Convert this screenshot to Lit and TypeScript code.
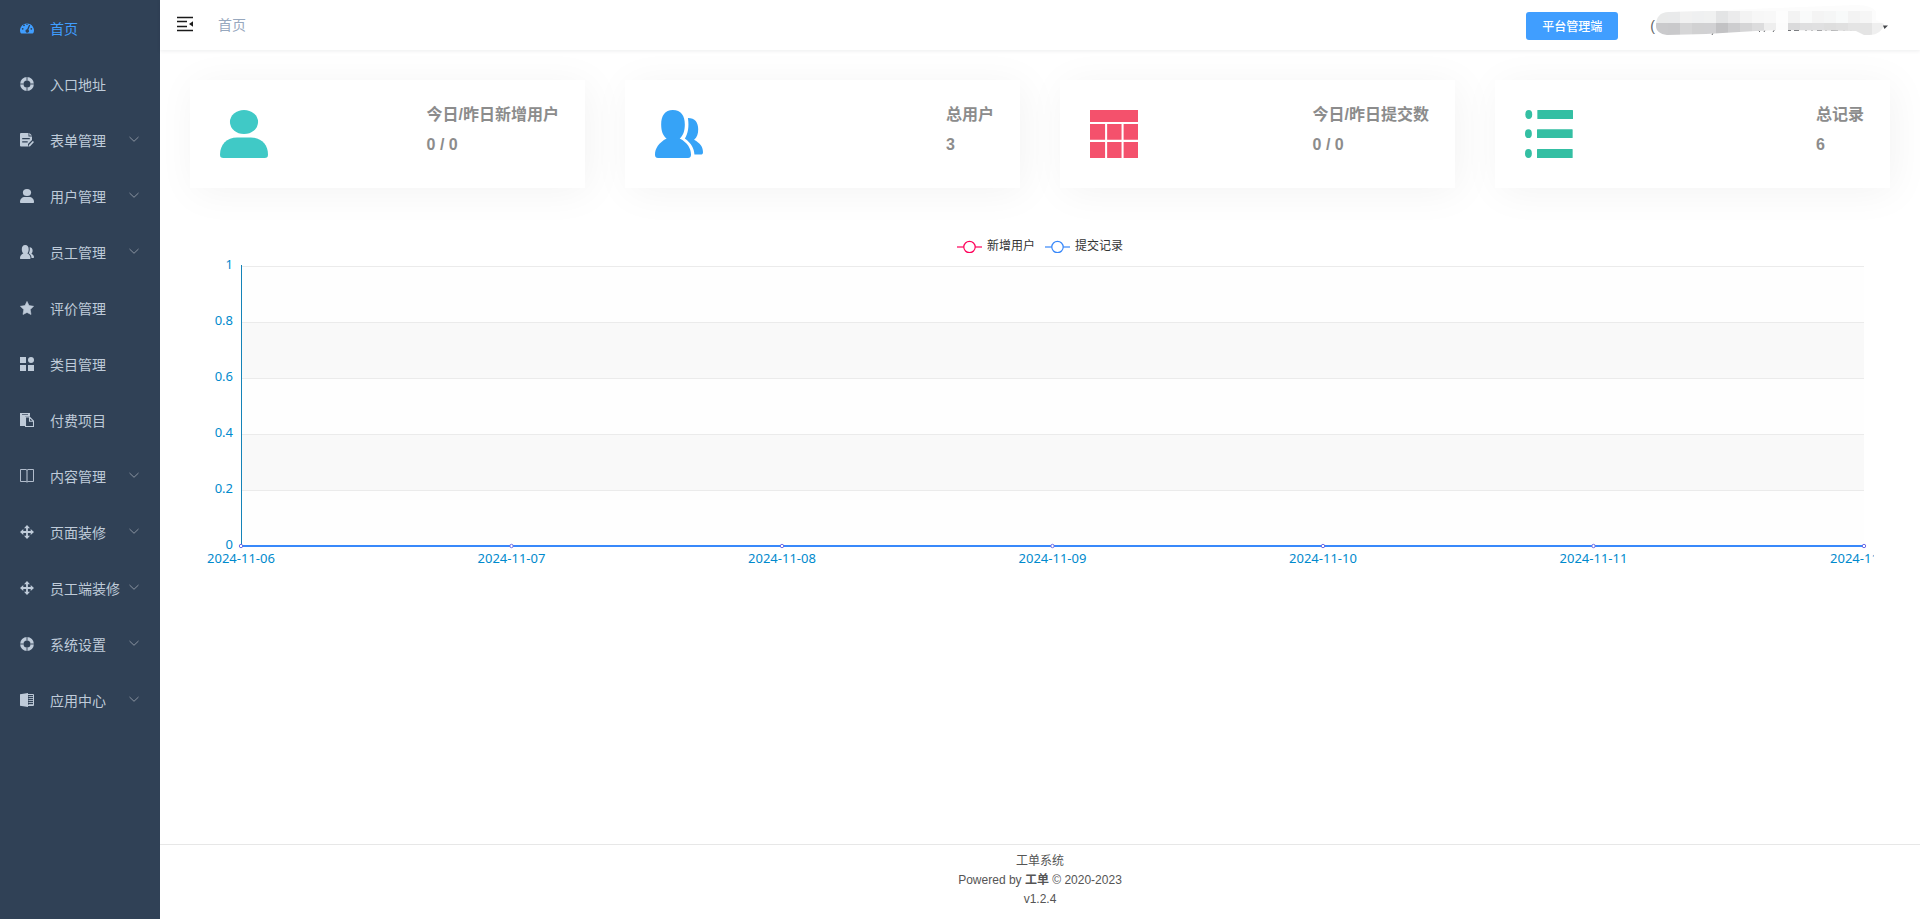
import { LitElement, html, svg, css } from "lit";
import { customElement, property, state } from "lit/decorators.js";
import { classMap } from "lit/directives/class-map.js";

const icons: Record<string, unknown> = {
  dashboard: svg`<path fill="currentColor" fill-rule="evenodd" d="M1.400 12.600a1 1 0 0 1-.8-.5A7 6.800 0 1 1 13.400 12.100a1 1 0 0 1-.8.500ZM1.800 7.800a.9.9 0 1 0 1.800 0a.9.9 0 1 0-1.800 0ZM3.100 4.300a.9.9 0 1 0 1.800 0a.9.9 0 1 0-1.800 0ZM6.100 2.900a.9.9 0 1 0 1.800 0a.9.9 0 1 0-1.800 0ZM10.400 7.800a.9.9 0 1 0 1.800 0a.9.9 0 1 0-1.800 0ZM9.100 3.800L7.100 8.300a1.700 1.700 0 1 0 1.300.45L10.200 4.300Z"/>`,
  ring: svg`<circle cx="7" cy="7" r="5.200" fill="none" stroke="currentColor" stroke-width="3.400"/><path d="M7 0v3.600M7 10.400V14M0 7h3.600M10.400 7H14" stroke="#304156" stroke-width=".9"/>`,
  form: svg`<path fill="currentColor" fill-rule="evenodd" d="M1 0h7.500v3.400H12V7L8 11v2.600H1a1 1 0 0 1-1-1V1a1 1 0 0 1 1-1ZM2.200 5v1.200h7.600V5ZM2.200 8.200v1.200h5.500V8.200Z"/><path fill="currentColor" d="M9.300 0l2.700 2.500H9.300ZM12.800 8l1.200 1.100-3.900 4.100-1.700.6.500-1.700Z"/>`,
  user: svg`<ellipse cx="7" cy="3.500" rx="4.100" ry="3.500" fill="currentColor"/><path fill="currentColor" d="M0 13C0 10 2 8 5 8h4c3 0 5 2 5 5 0 .8-.3 1-1 1H1c-.7 0-1-.2-1-1Z"/>`,
  people: svg`<path fill="currentColor" d="M5.200 0C7.600 0 8.700 1.700 8.700 4.200c0 1.900-.5 3.300-1.500 4.100C9.500 9.500 10.500 11.200 10.500 13c0 .7-.2 1-.9 1H.9c-.7 0-.9-.3-.9-1 0-1.800 1.100-3.500 3.400-4.700C2.300 7.500 1.800 6.100 1.800 4.200 1.800 1.700 2.900 0 5.200 0Z"/><path fill="currentColor" d="M9.600 2.300c2.100 0 3 1.300 3 3.300 0 1.400-.3 2.300-1.200 3.100C13.200 9.700 14 10.800 14 12.300c0 .5-.2.700-.7.700h-1.800c-.1-1.900-.9-3.300-2.800-4.700.9-1.400 1.300-3.500.9-6Z"/>`,
  star: svg`<path fill="currentColor" stroke="currentColor" stroke-width=".6" stroke-linejoin="round" d="M7 .4l2 4.200 4.600.7-3.400 3.300.8 4.900L7 11.400 3 13.500l.8-4.900L.4 5.300 5 4.600Z"/>`,
  blocks: svg`<path fill="currentColor" d="M0 0h6v6H0ZM0 8h6v6H0ZM8 8h6v6H8Z"/><circle cx="11" cy="3" r="3" fill="currentColor"/>`,
  paste: svg`<path fill="currentColor" d="M0 0h10v3.500H5V13H0Z"/><path d="M2 1.500h6" stroke="#304156" stroke-width=".7"/><path fill="none" stroke="currentColor" stroke-width="1.100" d="M5.500 4h4l4 4v5.500h-8ZM9.500 4V8.300h4"/>`,
  book: svg`<path fill="none" stroke="currentColor" stroke-width=".9" d="M.5.500h5.500l1 .7 1-.7h5.500v12H8l-1 .7-1-.7H.5Z"/><path d="M7 1v12" stroke="currentColor" stroke-width="2" opacity=".5"/>`,
  move: svg`<path d="M7 1.500v11M1.500 7h11" stroke="currentColor" stroke-width="1.800"/><path fill="currentColor" d="M7 0l3 3.300H4ZM7 14l3-3.300H4ZM0 7l3.300-3v6ZM14 7l-3.300-3v6Z"/>`,
  office: svg`<path fill="currentColor" d="M0 1.200L8 0v14L0 12.800Z"/><path d="M8 1.500h5.500v11H8" fill="none" stroke="currentColor"/><path d="M8.500 3.500H13M8.500 5.500H13M8.500 7.500H13M8.500 9.500H13M8.500 11.500H13" stroke="currentColor" stroke-width="1.200" opacity=".8"/>`,
  table: svg`<path fill="currentColor" d="M0 0h14v3.500H0ZM0 4.100h4.400v4.600H0ZM5 4.100h4.200v4.600H5ZM9.800 4.100H14v4.600H9.800ZM0 9.300h4.400V14H0ZM5 9.300h4.200V14H5ZM9.800 9.300H14V14H9.800Z"/>`,
  list: svg`<g fill="currentColor"><ellipse cx="1.100" cy="1.300" rx="1" ry="1.300"/><ellipse cx="1" cy="6.900" rx="1" ry="1.300"/><ellipse cx="1" cy="12.700" rx="1" ry="1.300"/><rect x="3.600" width="10.400" height="2.600" rx=".15"/><rect x="3.500" y="5.600" width="10.400" height="2.600" rx=".15"/><rect x="3.500" y="11.400" width="10.400" height="2.600" rx=".15"/></g>`,
};

@customElement("app-icon")
class AppIcon extends LitElement {
  @property() name = "user";
  static styles = css`
    :host { display: block; width: 14px; height: 14px; flex: none; }
    .icon { display: block; width: 100%; height: 100%; }
  `;
  render() {
    return html`<svg class="icon" viewBox="0 0 14 14" preserveAspectRatio="none" aria-hidden="true">${icons[this.name]}</svg>`;
  }
}

const menu = [
  { icon: "dashboard", label: "首页", sub: false },
  { icon: "ring", label: "入口地址", sub: false },
  { icon: "form", label: "表单管理", sub: true },
  { icon: "user", label: "用户管理", sub: true },
  { icon: "people", label: "员工管理", sub: true },
  { icon: "star", label: "评价管理", sub: false },
  { icon: "blocks", label: "类目管理", sub: false },
  { icon: "paste", label: "付费项目", sub: false },
  { icon: "book", label: "内容管理", sub: true },
  { icon: "move", label: "页面装修", sub: true },
  { icon: "move", label: "员工端装修", sub: true },
  { icon: "ring", label: "系统设置", sub: true },
  { icon: "office", label: "应用中心", sub: true },
];

@customElement("side-menu")
class SideMenu extends LitElement {
  @state() active = 0;
  static styles = css`
    :host { display: block; width: 160px; flex: none; background: #304156; }
    .item {
      display: flex; align-items: center; height: 56px; box-sizing: border-box;
      padding: 0 20px; color: #bfcbd9; font-size: 14px; line-height: 20px; text-decoration: none;
    }
    .item.active { color: #409eff; }
    .label { margin-left: 16px; white-space: nowrap; flex: 1 0 auto; padding-top: 2px; }
    .arrow { width: 12px; height: 12px; flex: none; color: #8a93a0; }
    .label + .arrow { margin-left: -16px; }
  `;
  render() {
    return html`<nav aria-label="主菜单">
      ${menu.map(
        (m, i) => html`<a class=${classMap({ item: true, active: i === this.active })} href="#"
          @click=${(e: Event) => { e.preventDefault(); this.active = i; }}>
          <app-icon name=${m.icon}></app-icon><span class="label">${m.label}</span>
          ${m.sub
            ? html`<svg class="arrow" viewBox="0 0 12 12" aria-hidden="true"><path d="M1.500 3L6 7.300 10.500 3" fill="none" stroke="currentColor"/></svg>`
            : ""}
        </a>`
      )}
    </nav>`;
  }
}

/* Mosaic tiles laid over the account name: upper row, lower row. */
const upper = ["#e9eaea","#e9eaeb","#f1f1f1","#eff0f1","#f0f1f1","#e3e4e5","#ebebec","#f3f3f3","#f7f7f7","#f8f8f8","#fdfdfd","#f3f3f3","#f9fafa","#f4f4f4","#f5f6f6","#f8fafa","#f3f3f3","#f6f6f6","#fcfcfc"];
const lower = ["#cacacc","#c9c9cb","#d6d6d7","#d1d1d2","#d1d1d3","#c2c2c4","#cdcdcf","#d5d5d6","#dcdcdd","#eeeeee","#fcfcfc","#dadadb","#dfdfe0","#e0e0e1","#dedede","#e0e0e0","#e4e4e4","#e4e4e4","#efefef"];

@customElement("top-bar")
class TopBar extends LitElement {
  static styles = css`
    :host {
      display: flex; align-items: center; height: 50px; background: #fff;
      box-shadow: 0 1px 4px rgba(0, 21, 41, 0.08); z-index: 1;
    }
    button { font-family: inherit; border: 0; cursor: pointer; }
    .toggle { padding: 0; margin: 0 0 2px 15px; width: 20px; height: 20px; background: none; }
    .toggle svg { display: block; }
    .crumb { margin-left: 23px; color: #97a8be; font-size: 14px; line-height: 20px; text-decoration: none; }
    .right { margin-left: auto; display: flex; align-items: center; padding-right: 30px; }
    .platform {
      background: #409eff; color: #fff; font-size: 12px; line-height: 14px; font-weight: 500;
      padding: 8px 16px 6px; border-radius: 3px; margin: 2px 32px 0 0;
    }
    .account {
      display: flex; align-items: center; background: none; padding: 0; color: #606266;
      font-size: 14px; line-height: 50px;
    }
    .account span { margin-top: 2px; }
    .account svg { display: block; margin-left: 1px; }
  `;
  render() {
    return html`
      <button class="toggle" aria-label="折叠菜单">
        <svg width="20" height="20" viewBox="0 0 20 20" aria-hidden="true">
          <path d="M2 3.500h16M2 7.500h10M2 12.500h10M2 16.500h16" stroke="#1a1a1a" stroke-width="1.500"/>
          <path d="M14 10L18 7.300v5.400Z" fill="#1a1a1a"/>
        </svg>
      </button>
      <a class="crumb" href="#">首页</a>
      <div class="right">
        <button class="platform">平台管理端</button>
        <button class="account" aria-label="账户">
          <span>(</span>
          <svg width="234" height="50" viewBox="0 0 234 50" aria-hidden="true">
            <defs><clipPath id="smear"><path d="M0 26C0 17 4 12 13 12L48 11 145 7 200 5C212 5 218 8 220 12L220 20 228 24C227 30 222 35 213 35H208L200 31 125 30 100 31 50 34 11 35C4 34 0 31 0 26Z"/></clipPath></defs>
            <g stroke="#66686c" fill="none">
              <path d="M57 33l-1 2M102 30l2 2M108 32l1-2M117 32l2-3M132 30.500h3M138 30.500h5M150 29v2M156 29v2M161 30.500h5M170 29v2M175 30.500h7M188 29v2M195 29v2"/>
            </g>
            <g clip-path="url(#smear)">
              <rect width="234" height="12" fill="#fcfcfc"/>
              ${upper.map((c, i) => svg`<rect x=${i * 12} y="11" width="12" height="12" fill=${c}/>`)}
              ${lower.map((c, i) => svg`<rect x=${i * 12} y="23" width="12" height="12" fill=${c}/>`)}
            </g>
            <path d="M227 25.500h5l-3.500 3.500Z" fill="#44464a"/>
          </svg>
        </button>
      </div>`;
  }
}

@customElement("stat-card")
class StatCard extends LitElement {
  @property() icon = "user";
  @property() label = "";
  @property() value = "";
  static styles = css`
    :host {
      display: flex; justify-content: space-between; box-sizing: border-box; height: 108px;
      background: #fff; box-shadow: 4px 4px 40px rgba(0, 0, 0, 0.05);
      font-weight: 700; font-size: 16px; line-height: 18px; color: #8c8c8c;
    }
    .icon { width: 48px; height: 48px; margin: 30px; }
    .icon.user { color: #40c9c6; }
    .icon.people { color: #36a3f7; }
    .icon.table { color: #f4516c; }
    .icon.list { color: #34bfa3; }
    .text { margin: 26px; display: grid; gap: 12px; align-content: start; }
  `;
  render() {
    return html`<app-icon class="icon ${this.icon}" name=${this.icon}></app-icon>
      <div class="text"><span>${this.label}</span><span>${this.value}</span></div>`;
  }
}

const dates = ["2024-11-06", "2024-11-07", "2024-11-08", "2024-11-09", "2024-11-10", "2024-11-11", "2024-11-12"];
const ticks = ["1", "0.8", "0.6", "0.4", "0.2", "0"];
const BAND = 56;

@customElement("trend-chart")
class TrendChart extends LitElement {
  static styles = css`
    :host { display: block; overflow: hidden; height: 350px; }
    .legend { display: flex; justify-content: center; gap: 10px; height: 14px; padding: 3px 0 13px; }
    .key {
      display: flex; align-items: center; gap: 5px; border: 0; padding: 0; background: none;
      font-family: inherit; font-size: 12px; line-height: 14px; color: #333; cursor: pointer;
    }
    .key svg { display: block; }
    .plot { margin: 0 10px 0 35px; }
    .canvas { display: block; width: 100%; height: 320px; overflow: visible; }
    .tick { font: 13px "Noto Sans", "Open Sans", sans-serif; fill: #008acd; }
  `;
  key(name: string, color: string) {
    return html`<button class="key">
      <svg width="25" height="14" aria-hidden="true">
        <path d="M0 8h25" stroke=${color} stroke-width="2" opacity=".6"/>
        <circle cx="12.500" cy="8" r="5.700" fill="#fff" stroke=${color} stroke-width="1.200"/>
      </svg>${name}</button>`;
  }
  render() {
    return html`
      <div class="legend">${this.key("新增用户", "#ff005a")}${this.key("提交记录", "#3888fa")}</div>
      <div class="plot">
        <svg class="canvas" role="img" aria-label="新增用户与提交记录趋势">
          ${ticks.slice(0, 5).map((_, i) => svg`<rect x="0" y=${i * BAND} width="100%" height=${BAND} fill=${i % 2 ? "#f9f9f9" : "#fefefe"}/>`)}
          ${ticks.slice(0, 5).map((_, i) => svg`<rect x="0" y=${i * BAND} width="100%" height="1" fill="#ebebeb"/>`)}
          <rect x="0" y="-1" width="1" height="281" fill="#1483b8"/>
          <rect x="0" y="279" width="100%" height="2" fill="#3888fa"/>
          ${ticks.map((t, i) => svg`<text class="tick" x="-8" y=${i * BAND + 3} text-anchor="end">${t}</text>`)}
          ${dates.map((d, i) => {
            const x = (i * 100) / (dates.length - 1) + "%";
            return svg`<circle cx=${x} cy="280" r="1.700" fill="#fff" stroke="#6a6ae8"/>
              <text class="tick" x=${x} y="297" text-anchor="middle">${d}</text>`;
          })}
        </svg>
      </div>`;
  }
}

@customElement("app-root")
class AppRoot extends LitElement {
  static styles = css`
    :host {
      display: flex; min-height: 100vh; background: #fff;
      font-family: "Liberation Sans", "Noto Sans CJK SC", sans-serif;
    }
    .main { flex: 1; min-width: 0; display: flex; flex-direction: column; }
    .content { flex: 1; padding: 30px; }
    .cards { display: grid; grid-template-columns: repeat(4, 1fr); gap: 40px; }
    .chart { margin-top: 32px; padding: 16px 16px 0; }
    footer {
      border-top: 1px solid #e7e7e7; padding: 7px 0 10px; text-align: center;
      font-size: 12px; line-height: 19px; color: #555;
    }
    footer p { margin: 0; }
  `;
  render() {
    return html`
      <side-menu></side-menu>
      <div class="main">
        <top-bar></top-bar>
        <main class="content">
          <section class="cards">
            <stat-card icon="user" label="今日/昨日新增用户" value="0 / 0"></stat-card>
            <stat-card icon="people" label="总用户" value="3"></stat-card>
            <stat-card icon="table" label="今日/昨日提交数" value="0 / 0"></stat-card>
            <stat-card icon="list" label="总记录" value="6"></stat-card>
          </section>
          <section class="chart"><trend-chart></trend-chart></section>
        </main>
        <footer>
          <p>工单系统</p>
          <p>Powered by <b>工单</b> © 2020-2023</p>
          <p>v1.2.4</p>
        </footer>
      </div>`;
  }
}
